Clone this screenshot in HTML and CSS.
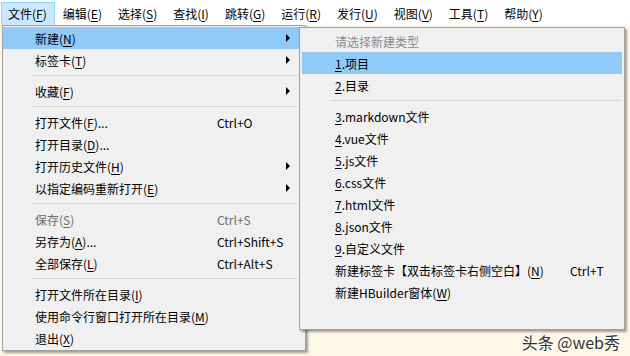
FILE: index.html
```html
<!DOCTYPE html>
<html lang="zh-CN">
<head>
  <meta charset="UTF-8" />
  <title>HBuilderX 文件菜单</title>
  <link rel="stylesheet" href="styles.css">
</head>
<body>
  <nav class="menubar">
    <span class="top-item active">文件(<u>F</u>)</span>
    <span class="top-item">编辑(<u>E</u>)</span>
    <span class="top-item">选择(<u>S</u>)</span>
    <span class="top-item">查找(<u>I</u>)</span>
    <span class="top-item">跳转(<u>G</u>)</span>
    <span class="top-item">运行(<u>R</u>)</span>
    <span class="top-item">发行(<u>U</u>)</span>
    <span class="top-item">视图(<u>V</u>)</span>
    <span class="top-item">工具(<u>T</u>)</span>
    <span class="top-item">帮助(<u>Y</u>)</span>
  </nav>

  <main class="workspace">
    <!-- File dropdown -->
    <div class="menu file-menu">
      <div class="row hover"><span class="label">新建(<u>N</u>)</span><span class="key"></span><span class="arrow"></span></div>
      <div class="row"><span class="label">标签卡(<u>T</u>)</span><span class="key"></span><span class="arrow"></span></div>
      <div class="sep"></div>
      <div class="row"><span class="label">收藏(<u>F</u>)</span><span class="key"></span><span class="arrow"></span></div>
      <div class="sep"></div>
      <div class="row"><span class="label">打开文件(<u>F</u>)...</span><span class="key">Ctrl+O</span></div>
      <div class="row"><span class="label">打开目录(<u>D</u>)...</span><span class="key"></span></div>
      <div class="row"><span class="label">打开历史文件(<u>H</u>)</span><span class="key"></span><span class="arrow"></span></div>
      <div class="row"><span class="label">以指定编码重新打开(<u>E</u>)</span><span class="key"></span><span class="arrow"></span></div>
      <div class="sep"></div>
      <div class="row disabled"><span class="label">保存(<u>S</u>)</span><span class="key">Ctrl+S</span></div>
      <div class="row"><span class="label">另存为(<u>A</u>)...</span><span class="key">Ctrl+Shift+S</span></div>
      <div class="row"><span class="label">全部保存(<u>L</u>)</span><span class="key">Ctrl+Alt+S</span></div>
      <div class="sep"></div>
      <div class="row"><span class="label">打开文件所在目录(<u>I</u>)</span></div>
      <div class="row"><span class="label">使用命令行窗口打开所在目录(<u>M</u>)</span></div>
      <div class="row"><span class="label">退出(<u>X</u>)</span></div>
    </div>

    <!-- New submenu -->
    <div class="menu new-menu">
      <div class="row header"><span class="label">请选择新建类型</span></div>
      <div class="row hover"><span class="label"><u>1</u>.项目</span></div>
      <div class="row"><span class="label"><u>2</u>.目录</span></div>
      <div class="sep"></div>
      <div class="row"><span class="label"><u>3</u>.markdown文件</span></div>
      <div class="row"><span class="label"><u>4</u>.vue文件</span></div>
      <div class="row"><span class="label"><u>5</u>.js文件</span></div>
      <div class="row"><span class="label"><u>6</u>.css文件</span></div>
      <div class="row"><span class="label"><u>7</u>.html文件</span></div>
      <div class="row"><span class="label"><u>8</u>.json文件</span></div>
      <div class="row"><span class="label"><u>9</u>.自定义文件</span></div>
      <div class="row"><span class="label wide">新建标签卡【双击标签卡右侧空白】(<u>N</u>)</span><span class="key">Ctrl+T</span></div>
      <div class="row"><span class="label">新建HBuilder窗体(<u>W</u>)</span></div>
    </div>

    <div class="watermark">头条 @web秀</div>
  </main>
</body>
</html>
```

FILE: styles.css
```css
body {
  margin: 0;
  width: 630px;
  height: 356px;
  overflow: hidden;
  font-family: "Noto Sans CJK SC", "Noto Sans", sans-serif;
  font-size: 12px;
  color: #000;
  background-color: #fdf7e5;
}
u {
  text-decoration: underline;
  text-underline-offset: 2px;
}
.menubar {
  display: flex;
  height: 25px;
  padding-left: 1px;
  background-color: #fff;
  box-sizing: border-box;
}
.top-item {
  display: flex;
  align-items: center;
  height: 22px;
  margin-top: 2px;
  padding: 0 7px 0 6px;
  border: 1px solid transparent;
  white-space: nowrap;
  line-height: 22px;
}
.top-item + .top-item {
  margin-left: 1px;
}
.top-item.active {
  background-color: #cce8ff;
  border-color: #99d1ff;
}
.workspace {
  position: relative;
  height: 331px;
}
.menu {
  position: absolute;
  background-color: #f0f0f0;
  border: 1px solid #a0a0a0;
  box-shadow: 2px 2px 2px rgba(0,0,0,0.35);
  box-sizing: border-box;
}
.file-menu {
  left: 2px;
  top: 0;
  width: 304px;
  height: 326px;
  padding: 1px 0 0;
}
.new-menu {
  left: 299px;
  top: 2px;
  width: 326px;
  height: 303px;
  padding: 2px 2px;
}
.row {
  display: flex;
  align-items: center;
  height: 22px;
  white-space: nowrap;
}
.file-menu .row {
  padding-left: 32px;
}
.new-menu .row {
  padding-left: 33px;
}
.row.hover {
  background-color: #91c9f7;
}
.row.disabled {
  color: #6d6d6d;
}
.row.header {
  color: #8a8a8a;
}
.file-menu .label {
  flex: 0 0 182px;
}
.new-menu .label {
  flex: 0 0 235px;
}
.key {
  flex: 1;
}
.arrow {
  width: 0;
  height: 0;
  margin-right: 15px;
  border-top: 4px solid transparent;
  border-bottom: 4px solid transparent;
  border-left: 4px solid #000;
}
.sep {
  height: 1px;
  margin: 4px 7px 4px 29px;
  background-color: #d7d7d7;
}
.new-menu .sep {
  margin: 4px 2px 4px 29px;
}
.watermark {
  position: absolute;
  right: 10px;
  bottom: 2px;
  font-size: 16px;
  color: #333;
  text-shadow: 0 0 2px #fff, 0 0 2px #fff;
}
```
